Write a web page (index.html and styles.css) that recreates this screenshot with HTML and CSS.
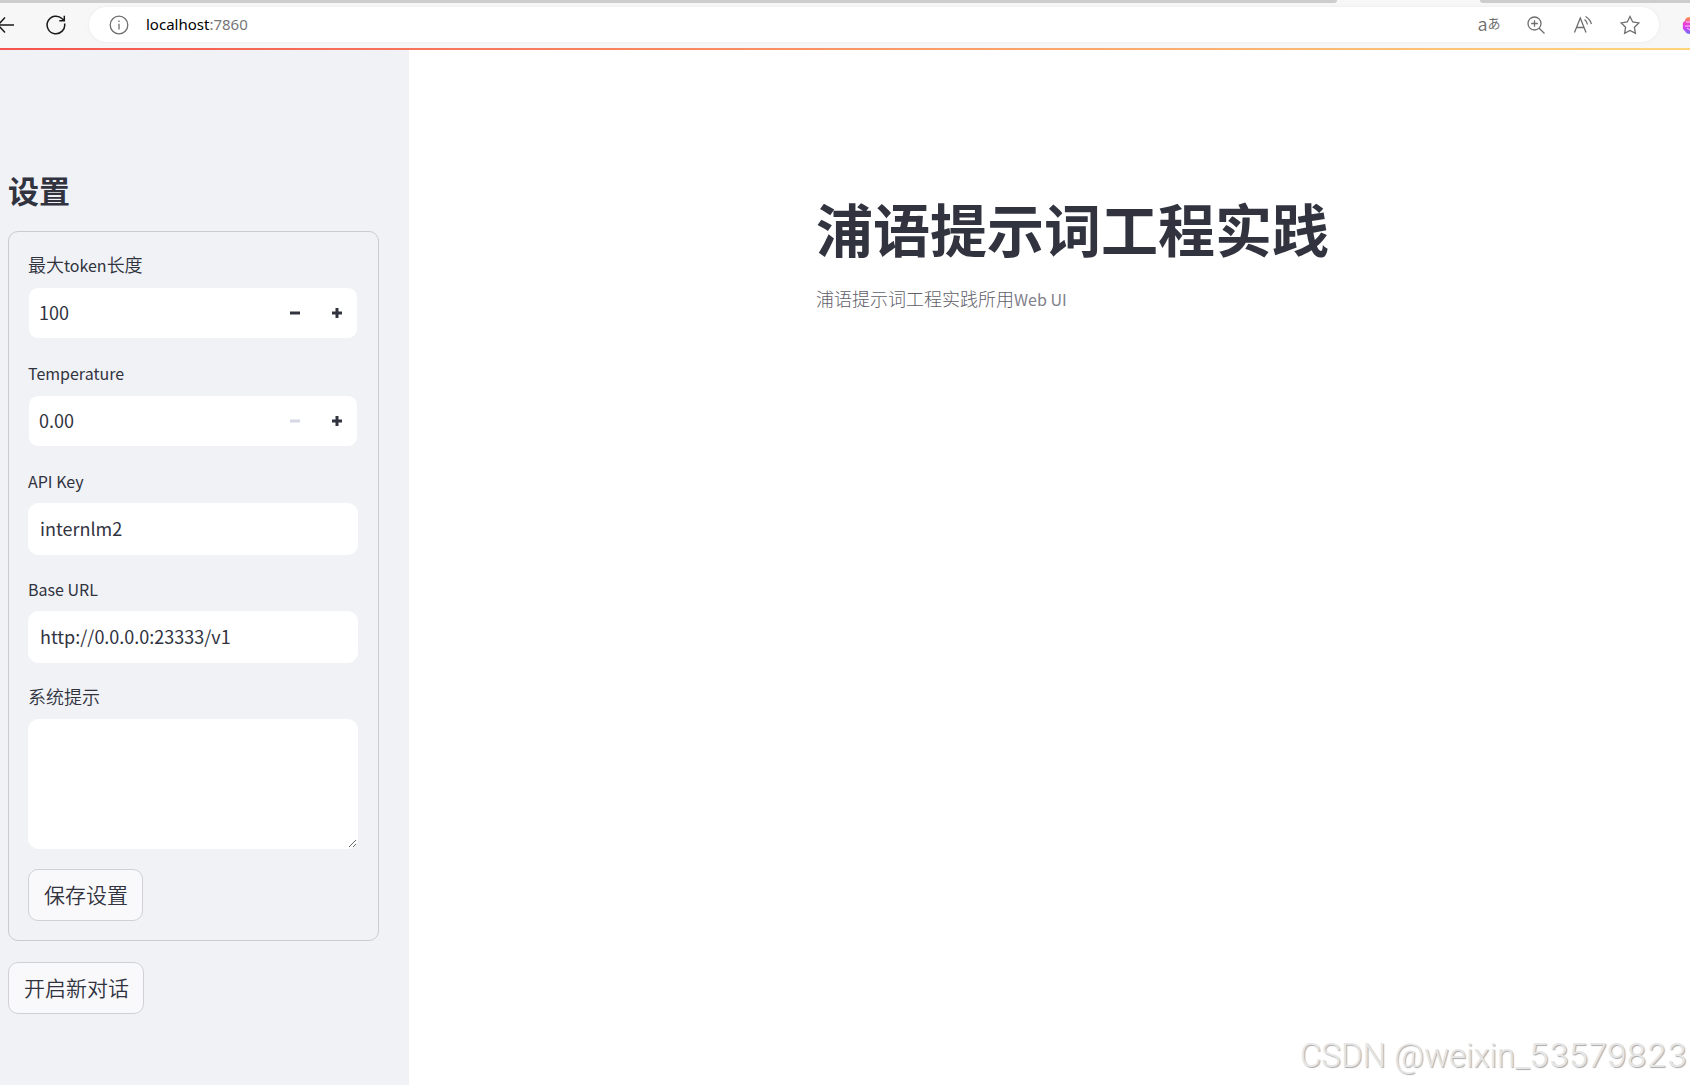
FILE: index.html
```html
<!DOCTYPE html>
<html lang="zh-CN">
<head>
<meta charset="utf-8">
<meta name="viewport" content="width=device-width, initial-scale=1">
<title>浦语提示词工程实践</title>
<link rel="stylesheet" href="styles.css">
</head>
<body>
<header class="browser">
  <div class="tabs"><span class="tabs-left"></span><span class="tabs-right"></span></div>
  <div class="toolbar">
    <button class="icon-btn back" type="button" aria-label="Back">
      <svg width="16" height="20" viewBox="0 0 16 20"><path d="M14 10H-3M5 2.500L-2 10L5 17.500"/></svg>
    </button>
    <button class="icon-btn reload" type="button" aria-label="Refresh">
      <svg width="20" height="20" viewBox="0 0 20 20"><path d="M18.600 8.500A8.800 8.800 0 1 1 16.200 3.800L18 5.500M18.300 .8V5.800H13.300"/></svg>
    </button>
    <div class="address">
      <svg class="info" width="20" height="20" viewBox="0 0 20 20"><circle cx="10" cy="10" r="8.800"/><path d="M10 8.800V14.500M10 5.500V7"/></svg>
      <a class="url" href="#">localhost<span class="port">:7860</span></a>
      <div class="actions">
        <button class="icon-btn translate" type="button" aria-label="Translate"><span class="latin-a">a</span><span class="kana-a">あ</span></button>
        <button class="icon-btn" type="button" aria-label="Zoom">
          <svg width="20" height="20" viewBox="0 0 20 20"><circle cx="8.500" cy="8.500" r="6.500"/><path d="M13.200 13.200L18.500 18.500M8.500 5.200V11.800M5.200 8.500H11.800"/></svg>
        </button>
        <button class="icon-btn" type="button" aria-label="Read aloud">
          <svg width="20" height="20" viewBox="0 0 20 20"><path d="M1.500 17.500L7.300 3L13 17.500M3.500 12.500H11.200M11.500 4.500Q14 6.200 14.500 9.500M12.500 1.500Q17 4 18.500 9"/></svg>
        </button>
        <button class="icon-btn" type="button" aria-label="Favorite">
          <svg width="20" height="20" viewBox="0 0 20 20"><path d="M10 1.500L12.700 7L18.800 7.900L14.400 12.200L15.400 18.300L10 15.400L4.600 18.300L5.600 12.200L1.200 7.900L7.300 7Z"/></svg>
        </button>
      </div>
    </div>
    <svg class="avatar" width="8" height="20" viewBox="0 0 8 20">
      <defs><linearGradient id="brain" x1="0" y1="0" x2="0" y2="1"><stop offset="0" stop-color="#f7a13c"/><stop offset=".35" stop-color="#f13fd0"/><stop offset=".65" stop-color="#d13df5"/><stop offset="1" stop-color="#6675f5"/></linearGradient></defs>
      <path fill="url(#brain)" d="M8 2Q3 2 3 6Q0 7 1 11Q0 14 3 16Q4 19 8 19Z"/>
      <path d="M8 7H4M3 11H8M8 15L5 13" fill="none" stroke="#fbd5f7" stroke-width="1"/>
    </svg>
  </div>
  <div class="decoration"></div>
</header>
<div class="app">
  <aside class="sidebar">
    <h2 class="side-title">设置</h2>
    <form class="settings">
      <div class="field">
        <label class="label" for="tokens">最大<span class="latin">token</span>长度</label>
        <div class="number">
          <input class="number-input" id="tokens" type="number" value="100">
          <button class="step" type="button" aria-label="Decrease tokens"><svg width="10" height="10" viewBox="0 0 10 10"><path d="M0 5H10"/></svg></button>
          <button class="step" type="button" aria-label="Increase tokens"><svg width="10" height="10" viewBox="0 0 10 10"><path d="M0 5H10M5 0V10"/></svg></button>
        </div>
      </div>
      <div class="field">
        <label class="label" for="temperature"><span class="latin">Temperature</span></label>
        <div class="number">
          <input class="number-input" id="temperature" type="number" step="0.01" value="0.00">
          <button class="step" type="button" aria-label="Decrease temperature" disabled><svg width="10" height="10" viewBox="0 0 10 10"><path d="M0 5H10"/></svg></button>
          <button class="step" type="button" aria-label="Increase temperature"><svg width="10" height="10" viewBox="0 0 10 10"><path d="M0 5H10M5 0V10"/></svg></button>
        </div>
      </div>
      <div class="field">
        <label class="label" for="key"><span class="latin">API Key</span></label>
        <input class="text" id="key" type="text" value="internlm2">
      </div>
      <div class="field">
        <label class="label" for="base"><span class="latin">Base URL</span></label>
        <input class="text" id="base" type="text" value="http://0.0.0.0:23333/v1">
      </div>
      <div class="field">
        <label class="label" for="system">系统提示</label>
        <textarea class="text area" id="system"></textarea>
      </div>
      <button class="button" type="button">保存设置</button>
    </form>
    <button class="button" type="button">开启新对话</button>
  </aside>
  <main class="main">
    <h1 class="title">浦语提示词工程实践</h1>
    <p class="caption">浦语提示词工程实践所用<span class="latin">Web UI</span></p>
  </main>
</div>
<div class="watermark">CSDN @weixin_<span class="digits">53579823</span></div>
</body>
</html>
```
FILE: styles.css
```css
* { box-sizing: border-box; }

body {
  margin: 0;
  min-height: 100vh;
  display: flex;
  flex-direction: column;
  position: relative;
  overflow-x: hidden;
  background: #fff;
  color: #31333f;
  font-family: "Noto Sans CJK SC", sans-serif;
}

button, input, textarea { font-family: inherit; color: inherit; }

/* Browser bar */
.browser { background: #f7f7f7; }
.tabs { display: flex; justify-content: space-between; height: 3px; }
.tabs-left { width: 1337px; background: #cdcdcd; border-bottom-right-radius: 8px; }
.tabs-right { width: 210px; background: #cdcdcd; border-bottom-left-radius: 8px; }
.toolbar { display: flex; align-items: center; height: 45px; padding-bottom: 2px; }
.icon-btn {
  display: flex;
  align-items: center;
  justify-content: center;
  padding: 0;
  border: 0;
  background: none;
  color: #6e6e6e;
}
.icon-btn svg, .info { fill: none; stroke: currentColor; stroke-width: 1.3; }
.back, .reload { color: #1a1a1a; }
.back svg, .reload svg { stroke-width: 1.5; }
.reload { margin-left: 30px; }
.address {
  flex: 1;
  display: flex;
  align-items: center;
  height: 35px;
  margin-left: 23px;
  padding: 0 19px 0 20px;
  border-radius: 18px;
  background: #fff;
  box-shadow: 0 0 3px #e6e6e6;
}
.info { color: #6e6e6e; }
.url {
  margin-left: 17px;
  padding-bottom: 2px;
  color: #000;
  font: 15px/20px "Noto Sans", sans-serif;
  text-decoration: none;
}
.port { color: #767676; }
.actions { display: flex; gap: 27px; margin-left: auto; }
.translate { width: 20px; padding-bottom: 3px; line-height: 20px; font-weight: 350; }
.latin-a { font-size: 18px; }
.kana-a { font-size: 13px; font-weight: 400; }
.avatar { margin-left: 23px; }
.decoration { height: 2px; background: linear-gradient(90deg, #f5534f, #ffd57c); }

/* Layout */
.app { flex: 1; display: flex; }
.sidebar {
  flex: 0 0 409px;
  display: flex;
  flex-direction: column;
  align-items: flex-start;
  padding: 117px 30px 48px 8px;
  background: #f0f2f6;
}
.side-title { margin: 0 0 18px; font-size: 31px; line-height: 46px; font-weight: 700; }
.main { flex: 1; padding: 145px 0 0 407px; }
.title { margin: 0; font-size: 57px; line-height: 64px; font-weight: 700; white-space: nowrap; }
.caption { margin: 26px 0 0; font-size: 18px; line-height: 26px; font-weight: 300; color: #5f6069; }
.latin { font-size: 16px; font-weight: 400; }
.caption .latin { color: #808189; }

/* Settings form */
.settings {
  align-self: stretch;
  display: flex;
  flex-direction: column;
  align-items: flex-start;
  gap: 20px;
  margin-bottom: 21px;
  padding: 19px 20px 19px 19px;
  border: 1px solid #c9cbd0;
  border-radius: 10px;
}
.field { width: 100%; }
.label { display: block; height: 36px; font-size: 18px; line-height: 27px; font-weight: 350; }
.text, .number {
  display: block;
  width: 100%;
  height: 52px;
  border: 1px solid #f0f2f6;
  border-radius: 10px;
  background: #fff;
}
.text { padding: 0 11px 2px; border-color: #fff; font-size: 18px; outline: 0; }
.area { height: 130px; resize: vertical; }
.number { display: flex; overflow: hidden; }
.number-input {
  flex: 1;
  min-width: 0;
  padding: 0 10px 2px;
  border: 0;
  outline: 0;
  background: none;
  font-size: 18px;
  appearance: textfield;
}
.number-input::-webkit-inner-spin-button { display: none; }
.step {
  display: flex;
  align-items: center;
  justify-content: center;
  width: 42px;
  padding: 0 0 0 2px;
  border: 0;
  background: none;
}
.step svg { stroke: #31333f; stroke-width: 3; }
.step:disabled svg { stroke: #d5d8e4; }
.button {
  height: 52px;
  padding: 0 14px 3px 15px;
  border: 1px solid #cfd1d5;
  border-radius: 10px;
  background: #f9f9fb;
  font-size: 21px;
  font-weight: 350;
}

.watermark {
  position: absolute;
  right: 3px;
  bottom: 9px;
  color: #e6e6e6;
  font: 33px/40px Roboto, sans-serif;
  font-weight: 300;
  text-shadow: 1px 1px 1px #aaa;
}
.digits { font-family: Inter, sans-serif; }
```
